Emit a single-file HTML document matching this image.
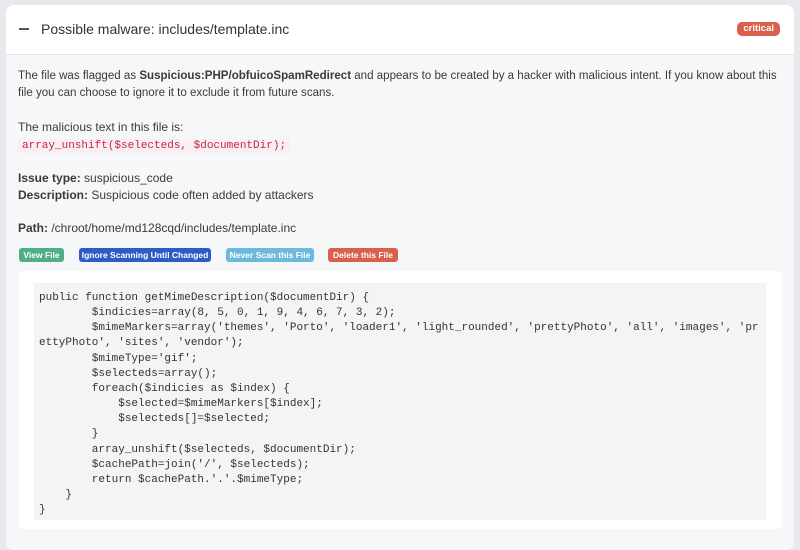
<!DOCTYPE html>
<html><head><style>
body{margin:0;background:#e8e9ed;width:800px;height:542px;overflow:hidden;font-family:"Liberation Sans",sans-serif;color:#333;}
.card{position:absolute;left:6px;top:5px;width:788px;height:545px;background:#f6f7f9;border-radius:8px;overflow:hidden;}
.hdr{height:49px;background:#fff;border-bottom:1px solid #e2e3e6;position:relative;}
.dash{position:absolute;left:13px;top:23px;width:10px;height:2px;background:#555;}
.title{position:absolute;left:35px;top:16px;font-size:14px;color:#333;}
.crit{position:absolute;right:14px;top:17px;background:#d9604a;color:#fff;font-size:9.5px;font-weight:bold;padding:1px 6px 2px;border-radius:5px;}
.t{position:absolute;left:12px;font-size:12px;line-height:17px;color:#3a3a3a;}
.code1{font-family:"Liberation Mono",monospace;color:#c7254e;background:#f9eef0;padding:1px 4px;font-size:11px;}
.btn{position:absolute;top:243px;height:14px;line-height:14px;font-size:8.5px;font-weight:bold;color:#fff;border-radius:3px;text-align:center;}
.box{position:absolute;left:13px;top:266px;width:763px;height:258px;background:#fff;border-radius:5px;}
.pre{position:absolute;left:15px;top:12px;width:732px;height:237px;background:#f4f4f5;margin:0;padding:8px 5px;box-sizing:border-box;font-family:"Liberation Mono",monospace;font-size:11px;line-height:15.15px;color:#333;white-space:pre;}
</style></head><body>
<div class="card">
<div class="hdr"><div class="dash"></div><div class="title">Possible malware: includes/template.inc</div><div class="crit">critical</div></div>
<div class="t" style="top:63px;white-space:nowrap;font-size:11.55px">The file was flagged as <b>Suspicious:PHP/obfuicoSpamRedirect</b> and appears to be created by a hacker with malicious intent. If you know about this<br>file you can choose to ignore it to exclude it from future scans.</div>
<div class="t" style="top:114px">The malicious text in this file is:<br><span class="code1">array_unshift($selecteds, $documentDir);</span></div>
<div class="t" style="top:165px"><b>Issue type:</b> suspicious_code<br><b>Description:</b> Suspicious code often added by attackers</div>
<div class="t" style="top:215px"><b>Path:</b> /chroot/home/md128cqd/includes/template.inc</div>
<div class="btn" style="left:13px;width:45px;background:#4fae86">View File</div>
<div class="btn" style="left:73px;width:132px;background:#2e5cc6">Ignore Scanning Until Changed</div>
<div class="btn" style="left:220px;width:88px;background:#6cb9dc">Never Scan this File</div>
<div class="btn" style="left:322px;width:70px;background:#d9604a">Delete this File</div>
<div class="box"><pre class="pre">public function getMimeDescription($documentDir) {
        $indicies=array(8, 5, 0, 1, 9, 4, 6, 7, 3, 2);
        $mimeMarkers=array('themes', 'Porto', 'loader1', 'light_rounded', 'prettyPhoto', 'all', 'images', 'pr
ettyPhoto', 'sites', 'vendor');
        $mimeType='gif';
        $selecteds=array();
        foreach($indicies as $index) {
            $selected=$mimeMarkers[$index];
            $selecteds[]=$selected;
        }
        array_unshift($selecteds, $documentDir);
        $cachePath=join('/', $selecteds);
        return $cachePath.'.'.$mimeType;
    }
}</pre></div>
</div>
</body></html>
